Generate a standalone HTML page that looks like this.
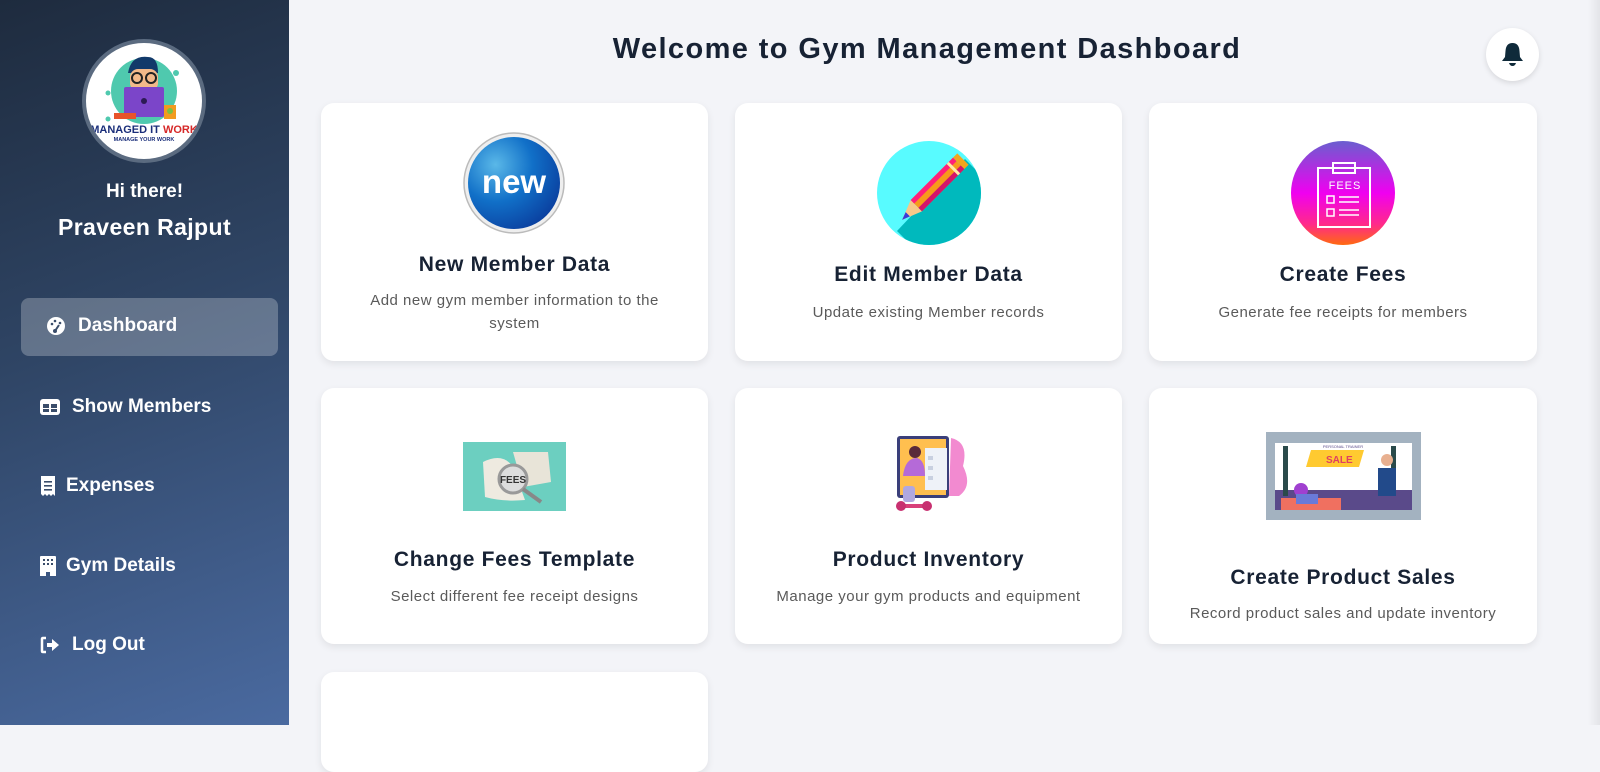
<!DOCTYPE html>
<html><head><meta charset="utf-8"><style>
*{margin:0;padding:0;box-sizing:border-box}
body{width:1600px;height:725px;overflow:hidden;background:#f3f4f8;font-family:"Liberation Sans",sans-serif;position:relative}
.sb{position:absolute;left:0;top:0;width:289px;height:725px;background:linear-gradient(160deg,#1e2b3e 0%,#2f4565 45%,#4a6aa0 100%)}
.t{position:absolute;white-space:nowrap;text-align:center}
.card{position:absolute;background:#fff;border-radius:13px;box-shadow:0 3px 8px rgba(0,0,0,.08)}
.card .h{position:absolute;left:0;right:0;text-align:center;font-size:21px;font-weight:bold;color:#172234;letter-spacing:0.7px}
.card .d{position:absolute;left:0;right:0;text-align:center;font-size:15px;color:#5a5a5a;line-height:23px;letter-spacing:0.5px}
.nav{position:absolute;left:40px;color:#fff;font-weight:bold;font-size:19px;display:flex;align-items:center;gap:12px}
</style></head><body>
<div class="sb">
  <div style="position:absolute;left:82px;top:39px;width:124px;height:124px;border-radius:50%;background:#5b6b80;padding:4px">
    <div style="width:116px;height:116px;border-radius:50%;background:#fff;overflow:hidden;position:relative">
      <svg width="116" height="116" viewBox="0 0 116 116">
        <circle cx="58" cy="48" r="33" fill="#4fc9ae"/>
        <circle cx="90" cy="30" r="3" fill="#4fc9ae"/><circle cx="22" cy="50" r="2.5" fill="#4fc9ae"/><circle cx="22" cy="76" r="2.5" fill="#4fc9ae"/>
        <path d="M42 30 Q45 12 62 14 Q72 14 72 30 Z" fill="#123a6a"/>
        <rect x="44" y="26" width="28" height="22" rx="8" fill="#f2b98a"/>
        <circle cx="51" cy="35" r="5" fill="none" stroke="#222" stroke-width="2"/><circle cx="65" cy="35" r="5" fill="none" stroke="#222" stroke-width="2"/>
        <rect x="38" y="44" width="40" height="30" rx="2" fill="#7b45c9"/>
        <circle cx="58" cy="58" r="3" fill="#2c1a55"/>
        <rect x="78" y="62" width="12" height="14" fill="#f29b20"/><circle cx="84" cy="68" r="3" fill="#7bc043"/>
        <rect x="28" y="70" width="22" height="6" fill="#e8542a"/>
        <text x="58" y="90" font-size="11" font-weight="bold" text-anchor="middle" fill="#1a2e7a" font-family="Liberation Sans">MANAGED IT <tspan fill="#d62828">WORK</tspan></text>
        <text x="58" y="98" font-size="5.5" font-weight="bold" text-anchor="middle" fill="#1a2e7a" font-family="Liberation Sans">MANAGE YOUR WORK</text>
      </svg>
    </div>
  </div>
  <div class="t" style="left:0;width:289px;top:181px;color:#fff;font-size:19px;font-weight:bold">Hi there!</div>
  <div class="t" style="left:0;width:289px;top:214px;color:#fff;font-size:23px;font-weight:bold;letter-spacing:0.4px">Praveen Rajput</div>
  <div style="position:absolute;left:21px;top:298px;width:257px;height:58px;border-radius:8px;background:rgba(255,255,255,.25)"></div>
  <div class="nav" style="left:46px;top:315px"><svg width="20" height="20" viewBox="0 0 20 20"><circle cx="10" cy="10" r="9" fill="#fff"/><circle cx="6" cy="8" r="1.3" fill="#3a4d6a"/><circle cx="9" cy="5" r="1.3" fill="#3a4d6a"/><circle cx="14" cy="7" r="1.3" fill="#3a4d6a"/><path d="M9 15 L13 9" stroke="#3a4d6a" stroke-width="2"/><circle cx="9" cy="15" r="2" fill="#3a4d6a"/></svg>Dashboard</div>
  <div class="nav" style="top:396px"><svg width="20" height="18" viewBox="0 0 20 18"><rect x="0" y="1" width="20" height="16" rx="3" fill="#fff"/><rect x="3" y="6" width="6" height="4" fill="#3a4d6a"/><rect x="11" y="6" width="6" height="4" fill="#3a4d6a"/><rect x="3" y="11" width="6" height="3" fill="#3a4d6a"/><rect x="11" y="11" width="6" height="3" fill="#3a4d6a"/></svg>Show Members</div>
  <div class="nav" style="top:475px;gap:10px"><svg width="16" height="20" viewBox="0 0 16 20"><path d="M1 0 L15 0 L15 20 L13 18 L11 20 L9 18 L7 20 L5 18 L3 20 L1 18Z" fill="#fff"/><rect x="4" y="5" width="8" height="1.6" fill="#3a4d6a"/><rect x="4" y="9" width="8" height="1.6" fill="#3a4d6a"/><rect x="4" y="13" width="8" height="1.6" fill="#3a4d6a"/></svg>Expenses</div>
  <div class="nav" style="top:555px;gap:10px"><svg width="16" height="20" viewBox="0 0 16 20"><path d="M0 1 Q0 0 1 0 L15 0 Q16 0 16 1 L16 20 L10 20 L10 16 L6 16 L6 20 L0 20Z" fill="#fff"/><rect x="3" y="3" width="2" height="2" fill="#3a4d6a"/><rect x="7" y="3" width="2" height="2" fill="#3a4d6a"/><rect x="11" y="3" width="2" height="2" fill="#3a4d6a"/><rect x="3" y="7" width="2" height="2" fill="#3a4d6a"/><rect x="7" y="7" width="2" height="2" fill="#3a4d6a"/><rect x="11" y="7" width="2" height="2" fill="#3a4d6a"/></svg>Gym Details</div>
  <div class="nav" style="top:634px"><svg width="20" height="18" viewBox="0 0 20 18"><path d="M6 2 L3 2 Q2 2 2 3 L2 15 Q2 16 3 16 L6 16" fill="none" stroke="#fff" stroke-width="2.5"/><path d="M7 7 L12 7 L12 3 L19 9 L12 15 L12 11 L7 11Z" fill="#fff"/></svg>Log Out</div>
</div>

<div class="t" style="left:289px;width:1276px;top:33px;font-size:29px;font-weight:bold;color:#172234;letter-spacing:1.4px">Welcome to Gym Management Dashboard</div>
<div style="position:absolute;left:1486px;top:28px;width:53px;height:53px;border-radius:50%;background:#fff;box-shadow:0 2px 6px rgba(0,0,0,.12)"><svg style="position:absolute;left:15px;top:14px" width="23" height="25" viewBox="0 0 23 25"><path d="M11.5 1 Q18 1 18.5 9 L19 15 L22 19 L1 19 L4 15 L4.5 9 Q5 1 11.5 1Z" fill="#0f2a3a"/><path d="M8 21 L15 21 Q14 24 11.5 24 Q9 24 8 21Z" fill="#0f2a3a"/></svg></div>
<div style="position:absolute;right:0;top:0;width:12px;height:725px;background:linear-gradient(90deg,#f3f4f8,#e3e4e8)"></div>

<!-- row 1 -->
<div class="card" style="left:321px;top:103px;width:387px;height:258px">
  <svg style="position:absolute;left:141px;top:28px" width="104" height="104" viewBox="0 0 104 104"><defs><radialGradient id="g1" cx=".3" cy=".3" r=".8"><stop offset="0" stop-color="#5ab8e8"/><stop offset=".5" stop-color="#1170c8"/><stop offset="1" stop-color="#0a3e9e"/></radialGradient></defs><circle cx="52" cy="52" r="50" fill="#eee" stroke="#bbb" stroke-width="1.5"/><circle cx="52" cy="52" r="46" fill="url(#g1)"/><text x="52" y="62" text-anchor="middle" font-size="33" font-weight="bold" fill="#fff" font-family="Liberation Sans">new</text></svg>
  <div class="h" style="top:150px">New Member Data</div>
  <div class="d" style="top:186px">Add new gym member information to the<br>system</div>
</div>
<div class="card" style="left:735px;top:103px;width:387px;height:258px">
  <svg style="position:absolute;left:142px;top:38px" width="104" height="104" viewBox="0 0 104 104"><clipPath id="c2"><circle cx="52" cy="52" r="52"/></clipPath><circle cx="52" cy="52" r="52" fill="#58fbff"/><path d="M88 18 L110 40 L110 110 L40 110 L20 90Z" fill="#00b9bd" clip-path="url(#c2)"/><g transform="rotate(45 52 52)"><rect x="44" y="10" width="16" height="60" fill="#f79a1b"/><rect x="44" y="10" width="5" height="60" fill="#ff1f7a"/><rect x="55" y="10" width="5" height="60" fill="#d4146a"/><rect x="44" y="4" width="16" height="6" fill="#f2a51e"/><rect x="44" y="16" width="16" height="3" fill="#ffe9a8"/><path d="M44 70 L60 70 L52 90Z" fill="#f6c98a"/><path d="M49 82 L55 82 L52 90Z" fill="#3a3ad8"/></g></svg>
  <div class="h" style="top:160px">Edit Member Data</div>
  <div class="d" style="top:198px">Update existing Member records</div>
</div>
<div class="card" style="left:1149px;top:103px;width:388px;height:258px">
  <svg style="position:absolute;left:142px;top:38px" width="104" height="104" viewBox="0 0 104 104"><defs><linearGradient id="g3" x1="0" y1="0" x2="0" y2="1"><stop offset="0" stop-color="#6a5fcf"/><stop offset=".5" stop-color="#f000f0"/><stop offset=".8" stop-color="#ff2a8a"/><stop offset="1" stop-color="#ff6a10"/></linearGradient></defs><circle cx="52" cy="52" r="52" fill="url(#g3)"/><rect x="27" y="27" width="52" height="59" fill="none" stroke="#fff" stroke-width="2"/><rect x="42" y="22" width="22" height="10" fill="none" stroke="#fff" stroke-width="2"/><text x="54" y="48" text-anchor="middle" font-size="11" fill="#fff" font-family="Liberation Sans" letter-spacing="1">FEES</text><rect x="36" y="55" width="7" height="7" fill="none" stroke="#fff" stroke-width="1.5"/><rect x="36" y="68" width="7" height="7" fill="none" stroke="#fff" stroke-width="1.5"/><path d="M48 56H68M48 61H68M48 69H68M48 74H68" stroke="#fff" stroke-width="1.5"/></svg>
  <div class="h" style="top:160px">Create Fees</div>
  <div class="d" style="top:198px">Generate fee receipts for members</div>
</div>

<!-- row 2 -->
<div class="card" style="left:321px;top:388px;width:387px;height:256px">
  <svg style="position:absolute;left:142px;top:54px" width="103" height="69" viewBox="0 0 103 69"><rect width="103" height="69" fill="#6ccfc0"/><path d="M20 20 Q40 10 50 25 L62 58 Q40 60 22 55Z" fill="#eeeae0"/><path d="M50 10 L85 10 L88 40 L60 45Z" fill="#e8e4d8"/><circle cx="50" cy="37" r="14" fill="#ddd" stroke="#999" stroke-width="3"/><text x="50" y="41" text-anchor="middle" font-size="10" font-weight="bold" fill="#333" font-family="Liberation Sans">FEES</text><path d="M60 47 L78 60" stroke="#888" stroke-width="4"/></svg>
  <div class="h" style="top:160px">Change Fees Template</div>
  <div class="d" style="top:197px">Select different fee receipt designs</div>
</div>
<div class="card" style="left:735px;top:388px;width:387px;height:256px">
  <svg style="position:absolute;left:158px;top:48px" width="76" height="80" viewBox="0 0 76 80"><path d="M58 2 Q76 6 70 30 Q80 50 66 60 L56 60 Z" fill="#f28ad0"/><rect x="4" y="0" width="52" height="62" rx="3" fill="#3a3f7a"/><rect x="7" y="3" width="46" height="56" fill="#ffbf4f"/><circle cx="22" cy="16" r="6" fill="#5a2a3a"/><path d="M10 40 Q12 22 24 22 Q32 24 32 40Z" fill="#b56ad8"/><rect x="32" y="12" width="22" height="42" fill="#eef2f8"/><rect x="35" y="20" width="5" height="4" fill="#c8d0e0"/><rect x="35" y="30" width="5" height="4" fill="#c8d0e0"/><rect x="35" y="40" width="5" height="4" fill="#c8d0e0"/><rect x="10" y="50" width="12" height="16" rx="3" fill="#b0a8e0"/><rect x="6" y="68" width="30" height="4" fill="#d8407a"/><circle cx="8" cy="70" r="5" fill="#c83070"/><circle cx="34" cy="70" r="5" fill="#c83070"/></svg>
  <div class="h" style="top:160px">Product Inventory</div>
  <div class="d" style="top:197px">Manage your gym products and equipment</div>
</div>
<div class="card" style="left:1149px;top:388px;width:388px;height:256px">
  <svg style="position:absolute;left:117px;top:44px" width="155" height="88" viewBox="0 0 155 88"><rect width="155" height="88" fill="#a3b2c0"/><rect x="9" y="11" width="137" height="67" fill="#fff"/><rect x="9" y="58" width="137" height="20" fill="#5a4a8a"/><rect x="15" y="66" width="60" height="12" fill="#f07060"/><rect x="17" y="14" width="5" height="50" fill="#2a4a4a"/><rect x="125" y="14" width="5" height="50" fill="#2a4a4a"/><path d="M45 18 L98 18 L93 35 L40 35Z" fill="#ffca30"/><text x="60" y="31" font-size="10" font-weight="bold" fill="#e04060" font-family="Liberation Sans">SALE</text><text x="77" y="16" text-anchor="middle" font-size="4" fill="#5a4a8a" font-family="Liberation Sans">PERSONAL TRAINER</text><rect x="112" y="36" width="18" height="28" fill="#224a8a"/><circle cx="121" cy="28" r="6" fill="#e8b090"/><circle cx="35" cy="58" r="7" fill="#a040d0"/><rect x="30" y="62" width="22" height="10" fill="#6a7ad8"/></svg>
  <div class="h" style="top:178px">Create Product Sales</div>
  <div class="d" style="top:214px">Record product sales and update inventory</div>
</div>

<!-- row 3 -->
<div class="card" style="left:321px;top:672px;width:387px;height:100px"></div>
</body></html>
